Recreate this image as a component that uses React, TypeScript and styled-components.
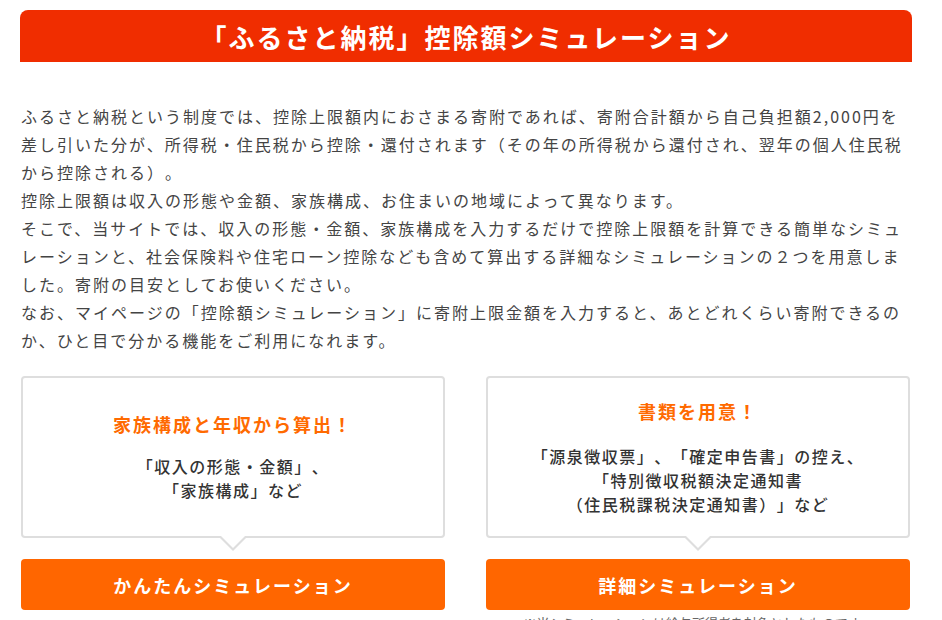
import styled, { createGlobalStyle } from 'styled-components'

const GlobalStyle = createGlobalStyle`
  body {
    margin: 0;
    background: #fff;
    font-family: "Noto Sans CJK JP", "Noto Sans", sans-serif;
    color: #444;
    text-spacing-trim: space-all;
  }
`

const Page = styled.div`
  width: 892px;
  padding: 10px 30px 0 20px;
`

const TitleBar = styled.h1`
  margin: 0;
  height: 52px;
  display: flex;
  align-items: center;
  justify-content: center;
  background: #f02d00;
  border-radius: 8px 8px 0 0;
  color: #fff;
  font-size: 26px;
  font-weight: 700;
  letter-spacing: 2px;
`

const Intro = styled.div`
  margin-top: 40px;
  padding-left: 1px;
  font-size: 16px;
  line-height: 28px;
  letter-spacing: 2px;
  color: #444;

  p {
    margin: 0;
  }
`

const Options = styled.div`
  margin-top: 22px;
  padding-left: 1px;
  display: grid;
  grid-template-columns: 424px 424px;
  column-gap: 41px;
`

const Option = styled.div`
  display: flex;
  flex-direction: column;
`

const InfoCard = styled.div`
  position: relative;
  height: 162px;
  box-sizing: border-box;
  border: 2px solid #dedede;
  border-radius: 4px;
  display: flex;
  flex-direction: column;
  align-items: center;
  justify-content: center;
  text-align: center;

  /* speech-bubble notch pointing at the button */
  &::before,
  &::after {
    content: '';
    position: absolute;
    left: 50%;
    width: 0;
    height: 0;
    border-style: solid;
    transform: translateX(-50%);
  }
  &::before {
    bottom: -15px;
    border-width: 15px 15px 0 15px;
    border-color: #dedede transparent transparent transparent;
  }
  &::after {
    bottom: -12px;
    border-width: 13px 13px 0 13px;
    border-color: #fff transparent transparent transparent;
  }
`

const CardTitle = styled.div`
  color: #ff6a00;
  font-size: 18px;
  font-weight: 700;
  line-height: 24px;
  letter-spacing: 2px;
`

const CardText = styled.div<{ $gap: number }>`
  margin-top: ${(p) => p.$gap}px;
  color: #333;
  font-size: 16px;
  font-weight: 500;
  line-height: 24px;
  letter-spacing: 1.5px;
`

const SimButton = styled.button`
  margin-top: 21px;
  height: 51px;
  border: none;
  border-radius: 4px;
  background: #ff6600;
  color: #fff;
  font-family: inherit;
  font-size: 18px;
  font-weight: 700;
  letter-spacing: 2px;
  cursor: pointer;
`

const Note = styled.div`
  margin-top: 4px;
  text-align: center;
  color: #666;
  font-size: 13px;
  line-height: 18px;
`

const App = () => {
  return (
    <>
      <GlobalStyle />
      <Page>
        <TitleBar>「ふるさと納税」控除額シミュレーション</TitleBar>
        <Intro>
          <p>
            ふるさと納税という制度では、控除上限額内におさまる寄附であれば、寄附合計額から自己負担額2,000円を差し引いた分が、所得税・住民税から控除・還付されます（その年の所得税から還付され、翌年の個人住民税から控除される）。
          </p>
          <p>控除上限額は収入の形態や金額、家族構成、お住まいの地域によって異なります。</p>
          <p>
            そこで、当サイトでは、収入の形態・金額、家族構成を入力するだけで控除上限額を計算できる簡単なシミュレーションと、社会保険料や住宅ローン控除なども含めて算出する詳細なシミュレーションの２つを用意しました。寄附の目安としてお使いください。
          </p>
          <p>
            なお、マイページの「控除額シミュレーション」に寄附上限金額を入力すると、あとどれくらい寄附できるのか、ひと目で分かる機能をご利用になれます。
          </p>
        </Intro>
        <Options>
          <Option>
            <InfoCard>
              <CardTitle>家族構成と年収から算出！</CardTitle>
              <CardText $gap={18}>
                「収入の形態・金額」、
                <br />
                「家族構成」など
              </CardText>
            </InfoCard>
            <SimButton>かんたんシミュレーション</SimButton>
          </Option>
          <Option>
            <InfoCard>
              <CardTitle>書類を用意！</CardTitle>
              <CardText $gap={21}>
                「源泉徴収票」、「確定申告書」の控え、
                <br />
                「特別徴収税額決定通知書
                <br />
                （住民税課税決定通知書）」など
              </CardText>
            </InfoCard>
            <SimButton>詳細シミュレーション</SimButton>
            <Note>※当シミュレーションは給与所得者を対象としたものです。</Note>
          </Option>
        </Options>
      </Page>
    </>
  )
}

export default App
